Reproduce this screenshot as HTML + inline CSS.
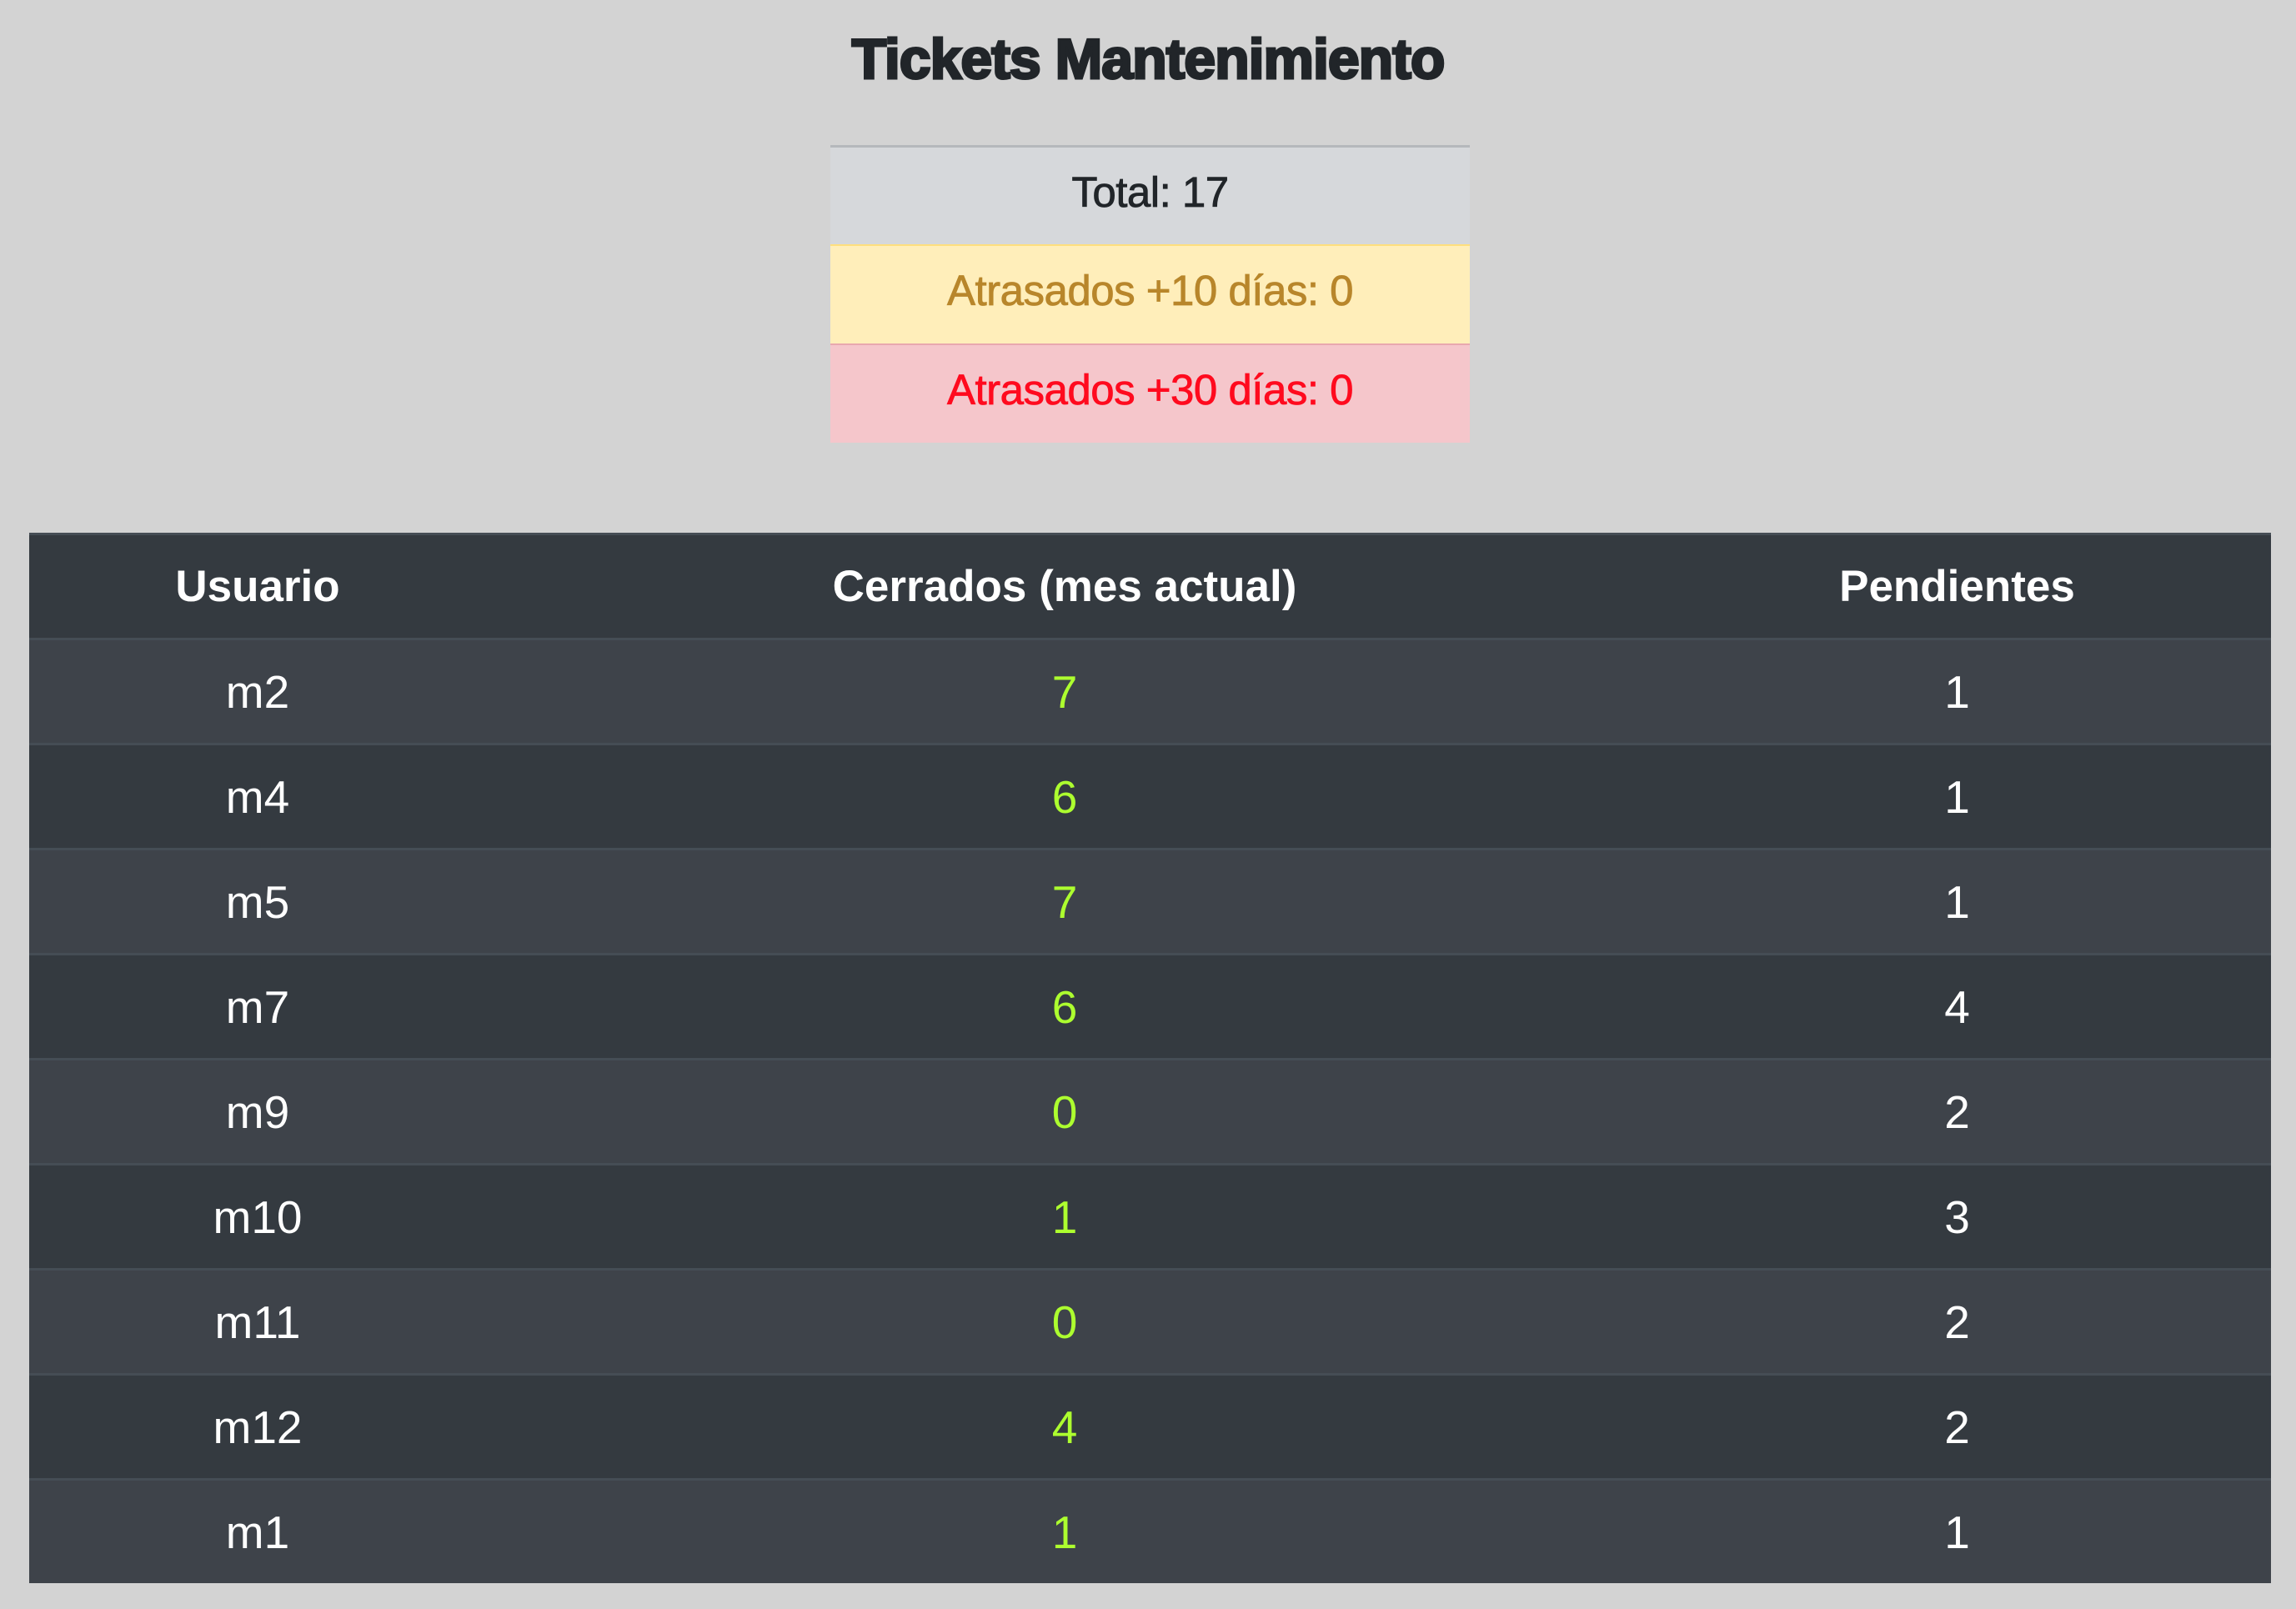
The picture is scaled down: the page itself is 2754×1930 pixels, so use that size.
<!DOCTYPE html>
<html><head><meta charset="utf-8"><style>
html,body{margin:0;padding:0;background:#d3d3d3;width:2754px;height:1930px;overflow:hidden;font-family:"Liberation Sans",sans-serif;}
h1{position:absolute;left:0;width:2754px;top:33px;margin:0;line-height:76px;text-align:center;font-size:68px;font-weight:bold;color:#212529;letter-spacing:-1px;-webkit-text-stroke:3px #212529;}
.sum{position:absolute;left:996px;top:174px;width:767px;border-top:3px solid #b5b8bc;}
.sum div{height:117px;line-height:108px;text-align:center;font-size:51px;letter-spacing:-0.5px;-webkit-text-stroke:0.8px currentColor;}
.s1{background:#d6d8db;color:#212529;height:116px!important;}
.s2{background:#ffeeba;color:#b8862b;border-top:2px solid #ffdf7e;}
.s3{background:#f5c6cb;color:#ff0a1e;border-top:2px solid #e9a8ae;}
table{position:absolute;left:35px;top:639px;width:2689px;border-collapse:collapse;}
td,th{height:123px;padding:0;text-align:center;font-size:55px;color:#fff;border-top:3px solid #454d55;}
th{font-size:53px;font-weight:bold;background:#343a40;}
tr:nth-child(odd) td{background:#3e434a;}
tr:nth-child(even) td{background:#343a40;}
td.g{color:#adff2f;}
</style></head><body>
<h1>Tickets Mantenimiento</h1>
<div class="sum">
<div class="s1">Total: 17</div>
<div class="s2">Atrasados +10 días: 0</div>
<div class="s3">Atrasados +30 días: 0</div>
</div>
<table>
<thead><tr><th style="width:548px">Usuario</th><th style="width:1388px">Cerrados (mes actual)</th><th>Pendientes</th></tr></thead>
<tbody>
<tr><td>m2</td><td class="g">7</td><td>1</td></tr>
<tr><td>m4</td><td class="g">6</td><td>1</td></tr>
<tr><td>m5</td><td class="g">7</td><td>1</td></tr>
<tr><td>m7</td><td class="g">6</td><td>4</td></tr>
<tr><td>m9</td><td class="g">0</td><td>2</td></tr>
<tr><td>m10</td><td class="g">1</td><td>3</td></tr>
<tr><td>m11</td><td class="g">0</td><td>2</td></tr>
<tr><td>m12</td><td class="g">4</td><td>2</td></tr>
<tr><td>m1</td><td class="g">1</td><td>1</td></tr>
</tbody>
</table>
</body></html>
